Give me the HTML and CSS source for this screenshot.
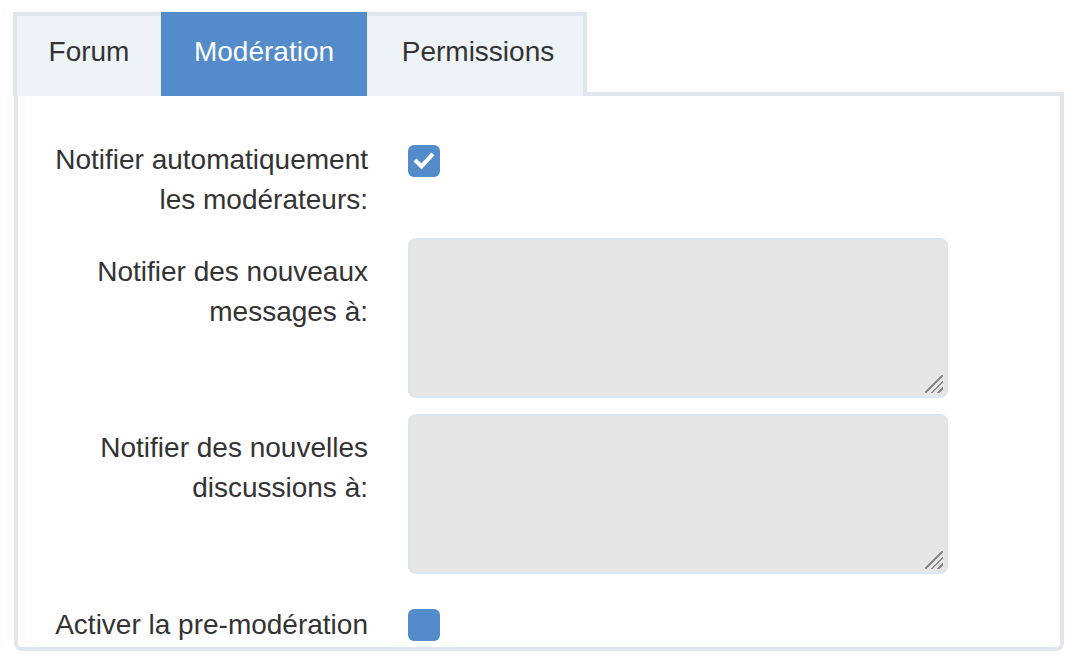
FILE: index.html
```html
<!DOCTYPE html>
<html lang="fr">
<head>
<meta charset="utf-8">
<link rel="stylesheet" href="styles.css">
</head>
<body>
<div class="wrap">
  <div class="tabs">
    <div class="tab">Forum</div>
    <div class="tab active">Modération</div>
    <div class="tab">Permissions</div>
  </div>
  <div class="panel">
    <div class="row row1">
      <div class="label">Notifier automatiquement<br>les modérateurs:</div>
      <div class="ctrl"><span class="check on"><svg viewBox="0 0 32 32" width="32" height="32"><path d="M8.5 16.5 L13.5 21.5 L23.5 10.5" fill="none" stroke="#fff" stroke-width="4.2" stroke-linecap="square"/></svg></span></div>
    </div>
    <div class="row row2">
      <div class="label">Notifier des nouveaux<br>messages à:</div>
      <div class="ctrl"><div class="textarea"><span class="grip"></span></div></div>
    </div>
    <div class="row row3">
      <div class="label">Notifier des nouvelles<br>discussions à:</div>
      <div class="ctrl"><div class="textarea"><span class="grip"></span></div></div>
    </div>
    <div class="row row4">
      <div class="label">Activer la pre-modération</div>
      <div class="ctrl"><span class="check"></span></div>
    </div>
  </div>
</div>
</body>
</html>
```
FILE: styles.css
```css
html, body {
  margin: 0;
  padding: 0;
  background: #fff;
}
body {
  font-family: "Liberation Sans", Arial, Helvetica, sans-serif;
  font-size: 28px;
  line-height: 40px;
  color: #333;
}
.wrap {
  padding: 12px 0 0 14px;
  width: 1050px;
}
.tabs {
  display: flex;
  margin-left: -1px;
}
.tab {
  box-sizing: border-box;
  height: 84px;
  background: #eef3f7;
  border-top: 4px solid #dfe6ee;
  padding: 16px 0 0;
  text-align: center;
}
.tab:first-child {
  width: 148px;
  border-left: 4px solid #dfe6ee;
  padding-left: 0;
}
.tab.active {
  width: 206px;
  background: #538bcb;
  border-top-color: #538bcb;
  color: #fff;
}
.tab:last-child {
  width: 220px;
  padding-left: 6px;
  border-right: 4px solid #dfe6ee;
}
.panel {
  box-sizing: border-box;
  height: 559px;
  margin-top: -4px;
  border: 4px solid #dfe6ee;
  border-radius: 0 0 8px 8px;
  padding-top: 28px;
  background: #fff;
}
.row {
  display: grid;
  grid-template-columns: 350px 540px;
  column-gap: 40px;
}
.label {
  text-align: right;
  padding-top: 14px;
}
.row1 .label { padding-top: 16px; }
.row1 { margin-bottom: 18px; }
.row2 { margin-bottom: 16px; }
.row3 { margin-bottom: 17px; }
.check {
  display: block;
  width: 32px;
  height: 32px;
  border-radius: 6px;
  background: #538bcb;
}
.check svg { display: block; }
.row1 .check { margin-top: 21px; }
.row4 .check { margin-top: 18px; }
.textarea {
  box-sizing: border-box;
  position: relative;
  width: 540px;
  height: 160px;
  background: #e6e6e6;
  border: 2px solid #dde5ee;
  border-radius: 8px;
}
.grip {
  position: absolute;
  right: 3px;
  bottom: 3px;
  width: 18px;
  height: 18px;
  background: linear-gradient(135deg,
    transparent 0 46%, #8a8a8a 46% 54%,
    transparent 54% 64%, #8a8a8a 64% 72%,
    transparent 72% 82%, #8a8a8a 82% 90%,
    transparent 90%);
}
```
